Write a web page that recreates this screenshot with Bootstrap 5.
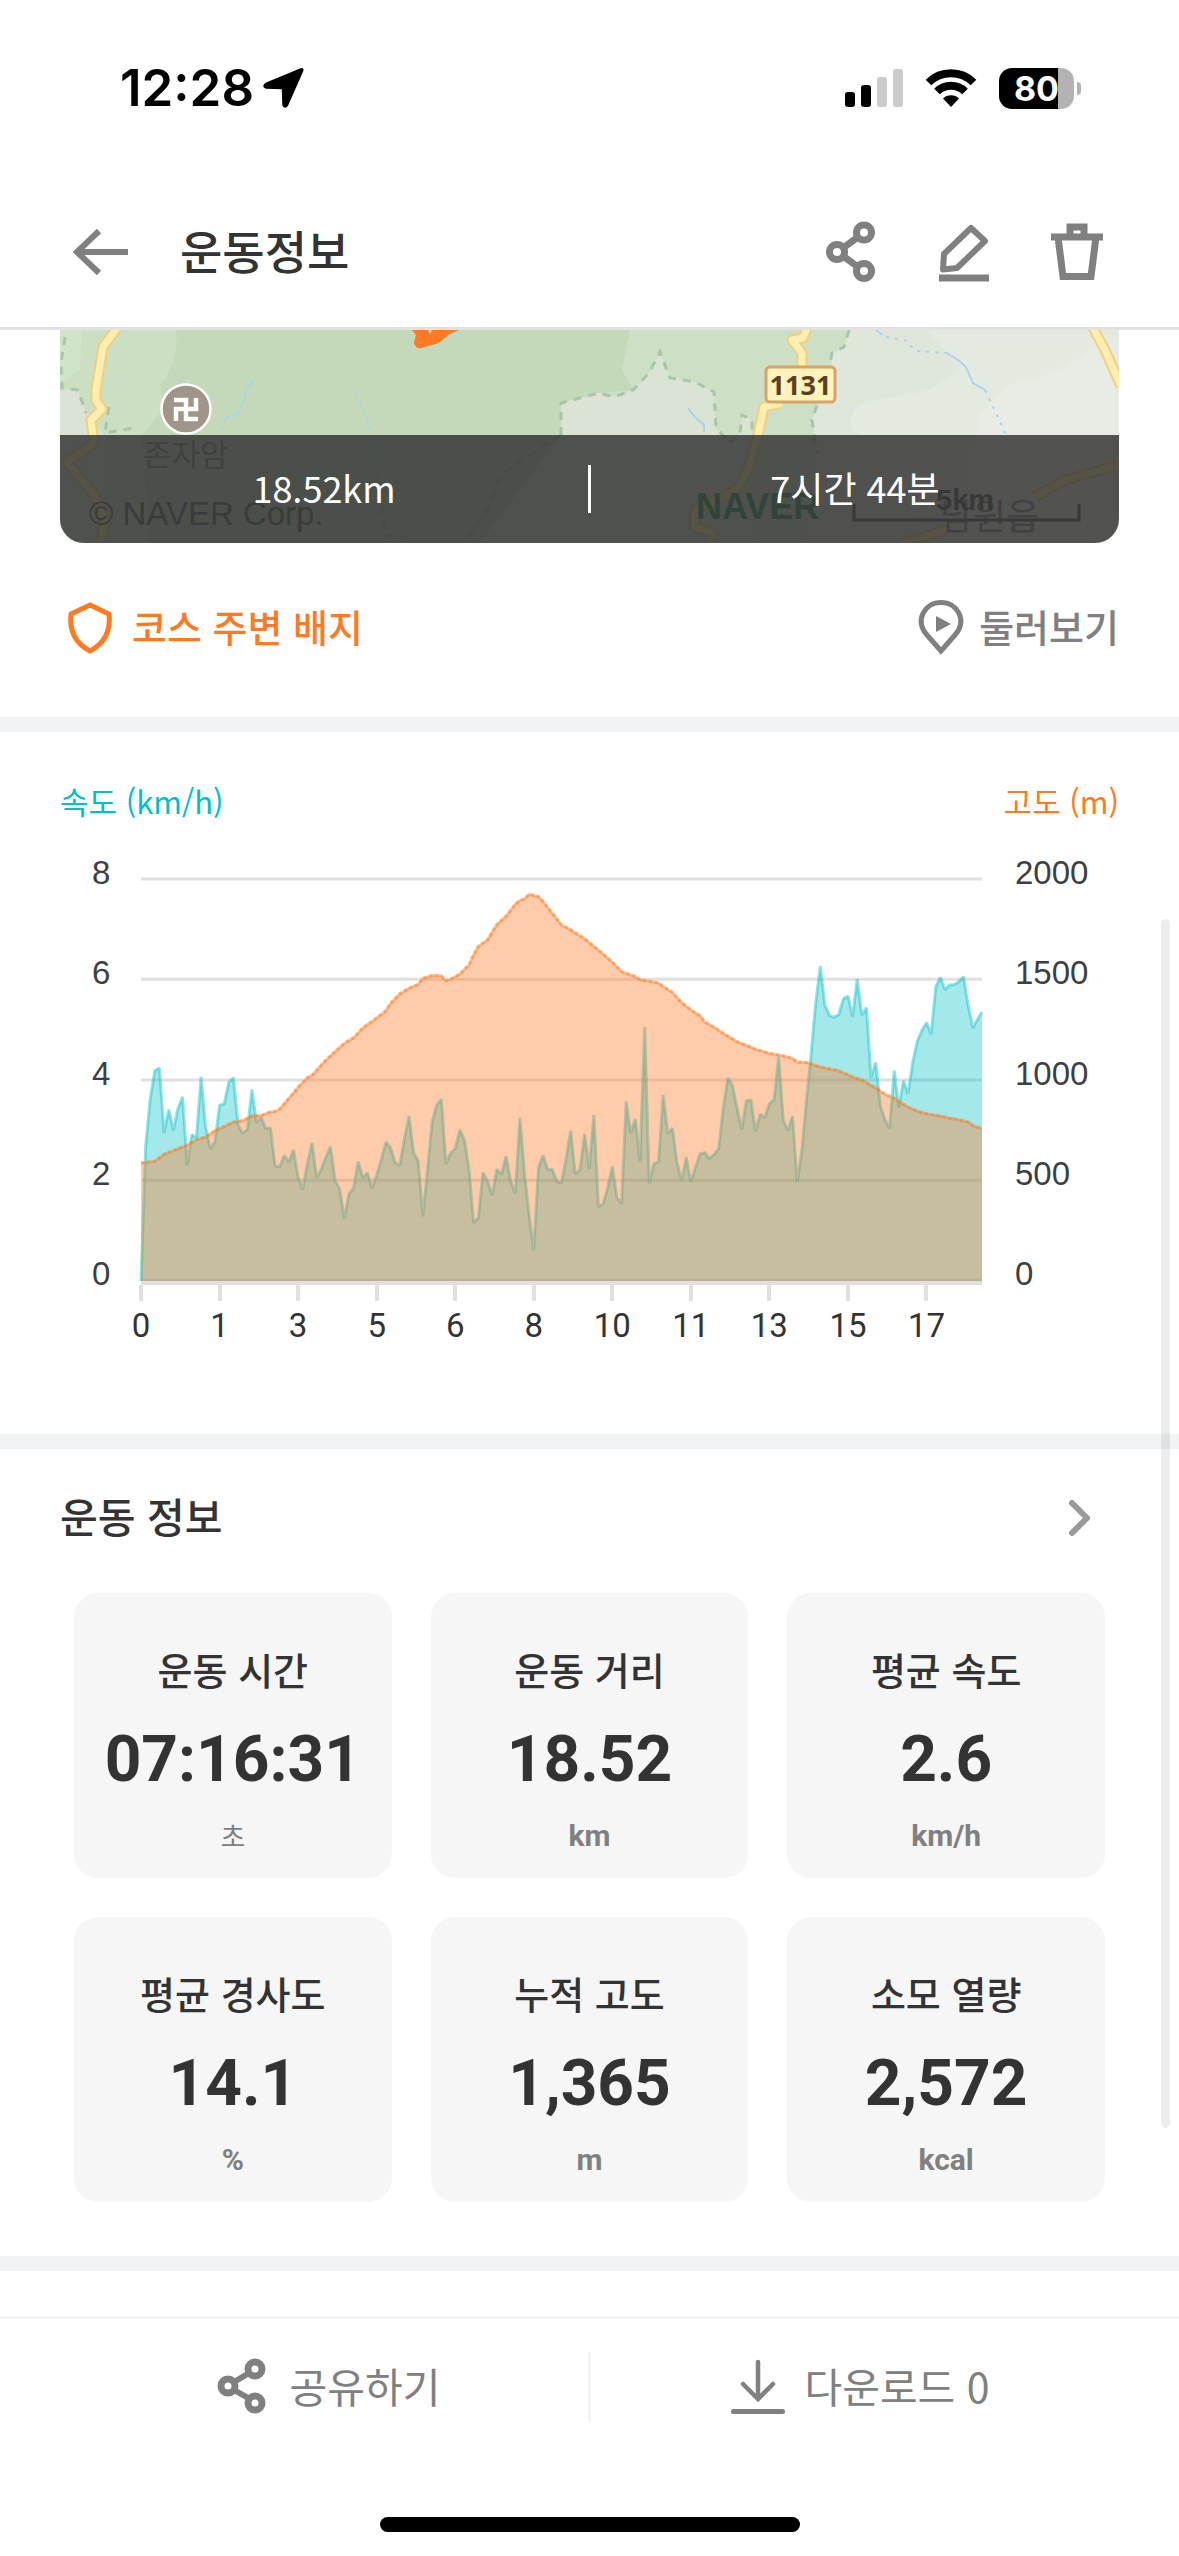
<!DOCTYPE html>
<html lang="ko">
<head>
<meta charset="utf-8">
<meta name="viewport" content="width=device-width, initial-scale=1">
<title>운동정보</title>
<link href="https://cdn.jsdelivr.net/npm/bootstrap@5.3.0/dist/css/bootstrap.min.css" rel="stylesheet">
<style>
  :root { --ink: #333; --dim: #808080; --orange: #ff7a22; --cyan: #00bfc8; --rule: #f1f3f5; }
  body { font-family: Roboto, "Noto Sans CJK KR", sans-serif; color: var(--ink); background: #fff; }
  svg { display: block; flex: none; }
  .icon-line { fill: none; stroke: currentColor; stroke-width: 7; }
  .btn-plain { border: 0; padding: 0; background: none; color: var(--dim); text-decoration: none; }
  .statusbar { height: 176px; padding: 0 98px 0 120px; color: #000; }
  .statusbar .inner { padding-top: 60px; height: 116px; }
  .clock { font: 600 51px/56px Inter, sans-serif; }
  .wifi { margin: 0 22px 0 21px; }
  .battery { position: relative; width: 75px; height: 41px; border-radius: 13px; overflow: hidden;
    background: linear-gradient(90deg, #000 59px, #b3b3b3 59px); color: #fff; font: 700 34px/41px Inter, sans-serif; text-align: center; }
  .nub { width: 4px; height: 13px; border-radius: 0 4px 4px 0; background: #b3b3b3; margin-left: 3px; }
  .appbar { height: 154px; padding: 0 72px; border-bottom: 3px solid #e2e2e2; }
  .appbar h1 { font-size: 46px; line-height: 60px; font-weight: 500; margin: 0 0 0 48px; padding-bottom: 6px; }
  .tools { gap: 53px; }
  .kr { font-family: "Noto Sans CJK KR", sans-serif; }
  .gutter { padding-left: 60px; padding-right: 60px; }
  .mapcard { position: relative; height: 213px; border-radius: 0 0 24px 24px; overflow: hidden; }
  .mapcard svg { width: 100%; height: 100%; }
  .mapbar { position: absolute; left: 0; right: 0; bottom: 0; height: 108px; background: rgba(51,51,51,.83); color: #fff; font-size: 36px; }
  .mapbar span { padding-bottom: 5px; }
  .mapbar i { width: 3px; height: 48px; background: #fff; }
  .links { height: 174px; font-size: 38px; line-height: 48px; font-weight: 500; padding-bottom: 6px; }
  .links span { padding-bottom: 3px; }
  .band { height: 15px; background: var(--rule); }
  .chartbox { height: 702px; padding-top: 47px; }
  .legend { font-size: 31px; line-height: 44px; }
  .chartrow { margin-top: 30px; }
  .axis { width: 81px; height: 441px; font: 33px/40px "Liberation Sans", sans-serif; color: #3c4043; }
  .axis.lt { padding-left: 32px; }
  .axis.rt { width: 137px; padding-left: 33px; }
  .plot { padding-top: 26px; min-width: 0; }
  .plot svg { width: 100%; height: 402px; overflow: visible; }
  .ticks { border-top: 4px solid #e0e0e0; }
  .ticks ol { margin: 0 0 0 calc(100% * -8.5 / 182); padding: 0; list-style: none; width: 100%; }
  .ticks li { flex: 0 0 calc(100% * 17 / 182); text-align: center; font-size: 33px; line-height: 44px; }
  .ticks li::before { content: ""; display: block; width: 4px; height: 16px; margin: 0 auto 3px; background: #e0e0e0; }
  .info { padding: 36px 74px 0; height: 807px; }
  .info .head { margin: 0 14px 43px -14px; height: 65px; }
  .info h2 { font-size: 41px; line-height: 60px; font-weight: 500; margin: 0; }
  .tiles { --bs-gutter-x: 39px; --bs-gutter-y: 39px; }
  .tile { height: 285px; border-radius: 24px; background: #f6f6f6; text-align: center; padding-top: 51px; }
  .tile dt { font-size: 38px; line-height: 50px; font-weight: 500; }
  .tile dd { margin: 0; }
  .tile .num { font-size: 64px; line-height: 76px; font-weight: 700; margin-top: 28px; }
  .tile .unit { font-size: 30px; line-height: 40px; font-weight: 700; color: var(--dim); margin-top: 18px; }
  .tile .unit.kr { font-size: 27px; font-weight: 400; }
  .bottombar { margin-top: 45px; border-top: 3px solid var(--rule); height: 201px; padding-top: 33px; }
  .bottombar .btn-plain { font-size: 41px; line-height: 66px; }
  .bottombar .share { padding-left: 66px; }
  .bottombar .save { padding-right: 52px; }
  .bottombar .sep { width: 3px; height: 69px; background: var(--rule); }
  .homebar { width: 420px; height: 15px; border-radius: 8px; background: #000; }
  .thumb { position: absolute; top: 919px; right: 9px; width: 9px; height: 1209px; border-radius: 5px; background: rgba(0,0,0,.07); }
</style>
<script src="https://cdn.jsdelivr.net/npm/bootstrap@5.3.0/dist/js/bootstrap.bundle.min.js"></script>
</head>
<body class="position-relative">

<div class="statusbar">
  <div class="inner d-flex align-items-center">
    <span class="clock">12:28</span>
    <svg class="ms-2" width="42" height="42" viewBox="0 0 42 42"><path d="M39 2.500Q41 1.500 40 4L25 38Q23 41 21.500 38L21 22Q21 21 20 21L4 20.500Q1 19 4 17Z" fill="#000" stroke="#000" stroke-width="2.500" stroke-linejoin="round"/></svg>
    <svg class="ms-auto" width="59" height="38" viewBox="0 0 59 38"><rect y="23" width="10" height="15" rx="3"/><rect x="16" y="16" width="10" height="22" rx="3"/><g fill="#ccc"><rect x="32" y="8" width="10" height="30" rx="3"/><rect x="48" width="10" height="38" rx="3"/></g></svg>
    <svg class="wifi" width="52" height="38" viewBox="0 0 52 38"><g fill="none" stroke="#000" stroke-width="8"><path d="M3.500 13.500a32 32 0 0 1 45 0"/><path d="M12 22.500a20 20 0 0 1 28 0"/></g><path d="M26 38l-8-8.500a11.500 11.500 0 0 1 16 0z"/></svg>
    <div class="battery">80</div><div class="nub"></div>
  </div>
</div>

<header class="appbar d-flex align-items-center">
  <button class="btn-plain" type="button" aria-label="뒤로"><svg width="60" height="60" viewBox="0 0 60 60" class="icon-line"><path d="M56 30H6M27 9L5 30l22 21" stroke-width="6"/></svg></button>
  <h1 class="kr">운동정보</h1>
  <div class="tools d-flex ms-auto">
    <button class="btn-plain" type="button" aria-label="공유"><svg width="60" height="62" viewBox="0 0 60 62" class="icon-line"><circle cx="43" cy="11.500" r="7.500"/><circle cx="16" cy="31" r="7.500"/><circle cx="43" cy="50" r="7.500"/><path d="M22 27L37 16M22 35L37 46"/></svg></button>
    <button class="btn-plain" type="button" aria-label="편집"><svg width="60" height="62" viewBox="0 0 60 62" class="icon-line"><path d="M5 57H55" /><path d="M37 7L51 20L23 47L9 48.500L10 33Z" stroke-width="6" stroke-linejoin="round"/></svg></button>
    <button class="btn-plain" type="button" aria-label="삭제"><svg width="60" height="62" viewBox="0 0 60 62" class="icon-line"><path d="M4 16H56M11 16L16 55.500H44L49 16M23 15V6H37V15"/></svg></button>
  </div>
</header>

<main>
  <section class="gutter">
    <div class="mapcard">
      <svg viewBox="0 0 1059 213" preserveAspectRatio="xMidYMid slice">
        <rect width="1059" height="213" fill="#c4d9b9"/>
        <path d="M0 0H116Q120 30 100 55L104 78L82 105L90 213H0Z" fill="#ccdfc3"/>
        <path d="M0 0H22L20 40L0 55Z" fill="#cfe4cb"/>
        <path d="M0 60L18 60L26 83L44 105V213H0Z" fill="#dbe3d5"/>
        <path d="M570 0H789V213H430L501 105V73L540 63L573 60L562 40Z" fill="#cddfc5"/>
        <path d="M501 105V73L539 63L554 67L573 60L589 43L600 22L610 48L635 52L654 62L656 97L669 113L680 103L682 85L692 90L694 213H420Z" fill="#dae3d4"/>
        <path d="M789 0L784 17L772 23L770 60L757 75L752 90L757 123L745 213H1059V0Z" fill="#dfe6da"/>
        <path d="M868 0H1059V213H860L830 120L792 100Q785 75 815 70L870 60L900 40Z" fill="#e5eae0"/>
        <path d="M1030 20L1059 10V213H900L920 85L950 55Q1000 45 1030 20Z" fill="#e9ece5"/>
        <g fill="none" stroke="#a9c6a8" stroke-width="3" stroke-dasharray="8 7">
          <path d="M5 7L1 33L2 58L18 60L26 83M49 77L45 103L78 97"/>
          <path d="M501 105V73L539 63L554 67L573 60L589 43L600 22L610 48L635 52L654 62L656 97L669 113L680 103L682 85L692 90V105"/>
          <path d="M789 0L784 17L772 23L770 33L772 60L757 75L752 90L757 123M501 105L440 145L430 175L405 213M317 147L325 205L350 210"/>
        </g>
        <g fill="none" stroke="#a9d4ef" stroke-width="2">
          <path d="M193 51L187 58L185 67L179 83L166 88" stroke-dasharray="9 2"/>
          <path d="M816 0L822 5M887 23L898 30L906 37L913 53L925 60M628 78L635 87L644 95V102"/>
          <path d="M166 88L160 103M296 63L307 87L311 105L317 147M826 7L845 10L856 21L887 23M925 60L936 83L946 105" stroke-dasharray="3 6"/>
        </g>
        <g fill="none" stroke-linejoin="round">
          <path stroke="#f0cf80" stroke-width="11" d="M57 -2L43 17L36 60V70L42 79L31 90L34 113L7 132L36 167L45 193L40 213M747 -2L743 8L732 10L742 23V38M722 73L704 77L698 105L688 140L677 160L635 180V197L652 203L650 213M1032 -4L1045 20L1061 56M1059 135L1005 150L975 167M886 200L840 214"/>
          <path stroke="#feeeb0" stroke-width="7" d="M57 -2L43 17L36 60V70L42 79L31 90L34 113L7 132L36 167L45 193L40 213M747 -2L743 8L732 10L742 23V38M722 73L704 77L698 105L688 140L677 160L635 180V197L652 203L650 213M1032 -4L1045 20L1061 56M1059 135L1005 150L975 167M886 200L840 214"/>
        </g>
        <path d="M352 0L356 5L354 12Q355 19 361 18L376 14Q380 13 388 5L399 0H372L370 4L368 0Z" fill="#ff7a22"/>
        <circle cx="126" cy="79" r="24.500" fill="#9f9589" stroke="#fff" stroke-width="2.500"/>
        <path d="M114 70H126V89H138M116 91V79H136V68" fill="none" stroke="#fff" stroke-width="4.500"/>
        <rect x="706" y="37" width="69" height="35" rx="4" fill="#fff3bd" stroke="#d9a468" stroke-width="3"/>
        <text x="740.500" y="65" text-anchor="middle" font-family="Noto Sans" font-weight="700" font-size="27" fill="#5c4020">1131</text>
        <g font-family="Noto Sans CJK KR" fill="#888"><text x="83" y="136" font-size="31">존자암</text><text x="880" y="200" font-size="36">남원읍</text></g>
        <g font-family="Liberation Sans" fill="#666"><text x="29" y="195" font-size="33">© NAVER Corp.</text><text x="636" y="189" font-size="36" font-weight="700" fill="#309860">NAVER</text><text x="876" y="180" font-size="29" font-weight="700" fill="#555">5km</text></g>
        <path d="M794 174V190H1019V174" fill="none" stroke="#555" stroke-width="3"/>
      </svg>
      <div class="mapbar kr d-flex align-items-center">
        <span class="flex-fill text-center w-50">18.52km</span><i></i><span class="flex-fill text-center w-50">7시간 44분</span>
      </div>
    </div>
    <div class="links kr d-flex align-items-center justify-content-between">
      <a href="#" class="btn-plain d-flex align-items-center" style="color:var(--orange)"><svg width="60" height="60" viewBox="0 0 60 60" class="icon-line"><path d="M30 8L49 17C51 34 45 46 30 54C15 46 9 34 11 17Z" stroke-linejoin="round" stroke-width="5"/></svg><span class="ms-2 ps-1">코스 주변 배지</span></a>
      <a href="#" class="btn-plain d-flex align-items-center"><svg width="60" height="60" viewBox="0 0 60 60" class="icon-line"><path d="M30 54L16 38C3 23 14 5.500 30 5.500S57 23 44 38Z" stroke-width="5"/><path d="M25 19V35L40 27Z" fill="currentColor" stroke="none"/></svg><span class="ms-2">둘러보기</span></a>
    </div>
  </section>

  <div class="band"></div>

  <section class="gutter chartbox">
    <div class="legend kr d-flex justify-content-between"><span style="color:var(--cyan)">속도 (km/h)</span><span style="color:var(--orange)">고도 (m)</span></div>
    <div class="chartrow d-flex">
      <div class="axis lt d-flex flex-column justify-content-between"><span>8</span><span>6</span><span>4</span><span>2</span><span>0</span></div>
      <div class="plot flex-fill">
        <svg viewBox="0 311 182 1050" preserveAspectRatio="none" id="plot">
          <path d="M0 311H182M0 573H182M0 836H182M0 1098H182M0 1359H182" stroke="#e0e0e0" stroke-width="3" vector-effect="non-scaling-stroke"/>
        </svg>
        <div class="ticks"><ol class="d-flex"><li>0</li><li>1</li><li>3</li><li>5</li><li>6</li><li>8</li><li>10</li><li>11</li><li>13</li><li>15</li><li>17</li></ol></div>
      </div>
      <div class="axis rt d-flex flex-column justify-content-between"><span>2000</span><span>1500</span><span>1000</span><span>500</span><span>0</span></div>
    </div>
  </section>

  <div class="band"></div>

  <section class="info">
    <div class="head d-flex align-items-start justify-content-between"><h2 class="kr">운동 정보</h2>
      <button class="btn-plain" type="button" aria-label="운동 정보 더보기"><svg width="22" height="65" viewBox="0 0 22 65"><path d="M3 18L18 33L3 48" fill="none" stroke="#999" stroke-width="6" stroke-linecap="round" stroke-linejoin="round"/></svg></button></div>
    <div class="row row-cols-3 tiles">
      <div class="col"><dl class="tile mb-0"><dt class="kr">운동 시간</dt><dd class="num">07:16:31</dd><dd class="unit kr">초</dd></dl></div>
      <div class="col"><dl class="tile mb-0"><dt class="kr">운동 거리</dt><dd class="num">18.52</dd><dd class="unit">km</dd></dl></div>
      <div class="col"><dl class="tile mb-0"><dt class="kr">평균 속도</dt><dd class="num">2.6</dd><dd class="unit">km/h</dd></dl></div>
      <div class="col"><dl class="tile mb-0"><dt class="kr">평균 경사도</dt><dd class="num">14.1</dd><dd class="unit">%</dd></dl></div>
      <div class="col"><dl class="tile mb-0"><dt class="kr">누적 고도</dt><dd class="num">1,365</dd><dd class="unit">m</dd></dl></div>
      <div class="col"><dl class="tile mb-0"><dt class="kr">소모 열량</dt><dd class="num">2,572</dd><dd class="unit">kcal</dd></dl></div>
    </div>
  </section>

  <div class="band"></div>
</main>

<footer>
  <div class="bottombar kr d-flex">
    <button type="button" class="btn-plain share w-50 d-flex align-items-start justify-content-center"><svg width="60" height="69" viewBox="0 0 60 69" class="icon-line"><circle cx="41" cy="17" r="7"/><circle cx="14" cy="34" r="7"/><circle cx="41" cy="51" r="7"/><path d="M20 30L36 20.500M20 38L36 47" stroke-width="6"/></svg><span class="ms-3">공유하기</span></button>
    <div class="sep"></div>
    <button type="button" class="btn-plain save w-50 d-flex align-items-start justify-content-center"><svg width="60" height="69" viewBox="0 0 60 69" class="icon-line"><path d="M30 10V47M15 32L30 47L45 32" stroke-width="4.500" stroke-linecap="round"/><path d="M5.500 59.500H54.500" stroke-width="5" stroke-linecap="round"/></svg><span class="ms-3">다운로드 0</span></button>
  </div>
  <div class="homebar mx-auto"></div>
</footer>
<div class="thumb"></div>

<script>
  // One reading per step along the course, on the plot's vertical scale (311 = top, 1361 = base).
  const speed = [1361,1010,885,811,805,974,913,968,910,880,1059,979,985,828,960,1016,997,902,898,842,830,952,975,966,861,948,933,963,961,1060,1063,1033,1050,1018,1090,1122,1055,1000,1090,1070,1038,1010,1099,1120,1199,1133,1118,1049,1091,1079,1119,1085,1044,998,1013,1052,1060,990,930,1027,1047,1192,1070,945,902,886,1055,1027,1015,966,993,1070,1209,1196,1078,1100,1137,1069,1083,1035,1100,1132,935,1080,1190,1281,1065,1033,1069,1070,1101,1105,1040,968,1083,1070,977,1068,927,1168,1159,1118,1062,1142,1159,892,975,938,1049,698,1106,1054,1050,875,975,962,1052,1099,1038,1103,1063,1029,1026,1041,1031,1015,910,830,851,910,965,890,888,970,925,934,898,888,775,940,968,930,1103,1023,890,770,635,539,640,668,672,665,624,617,670,572,667,647,829,790,903,940,962,811,908,838,871,790,735,706,686,716,592,568,600,587,587,579,566,640,700,678,658];
  const height = [0,1053,3,1048,5,1030,10,1006,12,992,14,985,16,968,18,958,20,946,22,942,24,930,26,929,28,919,29,918,30,912,31,898,34,855,36,830,37,824,40,784,44,740,46,726,48,700,51,674,53,655,54,636,56,611,58,596,60,586,61,571,63,563,65,564,66,577,67,573,69,559,71,535,72,508,73,487,75,470,77,430,79,408,81,377,82,367,83,363,84,351,86,357,87,370,89,400,91,431,93,444,96,467,99,497,102,528,104,553,107,566,108,574,111,580,112,583,113,592,115,607,117,634,119,653,121,668,122,685,124,698,126,714,129,736,132,750,133,756,136,766,139,773,141,780,142,789,144,790,147,802,150,809,151,812,154,828,156,836,159,857,161,873,163,884,166,907,168,917,170,924,173,930,175,936,177,940,179,946,180,955,182,963];
  const plot = document.getElementById('plot');
  function add(line, fill, stroke, dots) {
    const make = (d, attrs) => {
      const p = document.createElementNS('http://www.w3.org/2000/svg', 'path');
      p.setAttribute('d', d);
      for (const k in attrs) p.setAttribute(k, attrs[k]);
      p.setAttribute('vector-effect', 'non-scaling-stroke');
      plot.appendChild(p);
    };
    make('M0 1361L' + line + 'L182 1361Z', { fill });
    make('M' + line, { fill: 'none', stroke, 'stroke-width': 3, 'stroke-linejoin': 'bevel' });
    if (dots) make('M' + line, { fill: 'none', stroke: dots, 'stroke-width': 3, 'stroke-dasharray': '3 3' });
  }
  add(speed.map((v, i) => i + ' ' + v).join('L'), 'rgba(0,191,197,.36)', 'rgba(0,191,197,.42)');
  const pts = [];
  for (let i = 0; i < height.length; i += 2) pts.push(height[i] + ' ' + height[i + 1]);
  add(pts.join('L'), 'rgba(255,122,34,.38)', 'rgba(255,122,34,.42)', 'rgba(255,122,34,.4)');
</script>
</body>
</html>
